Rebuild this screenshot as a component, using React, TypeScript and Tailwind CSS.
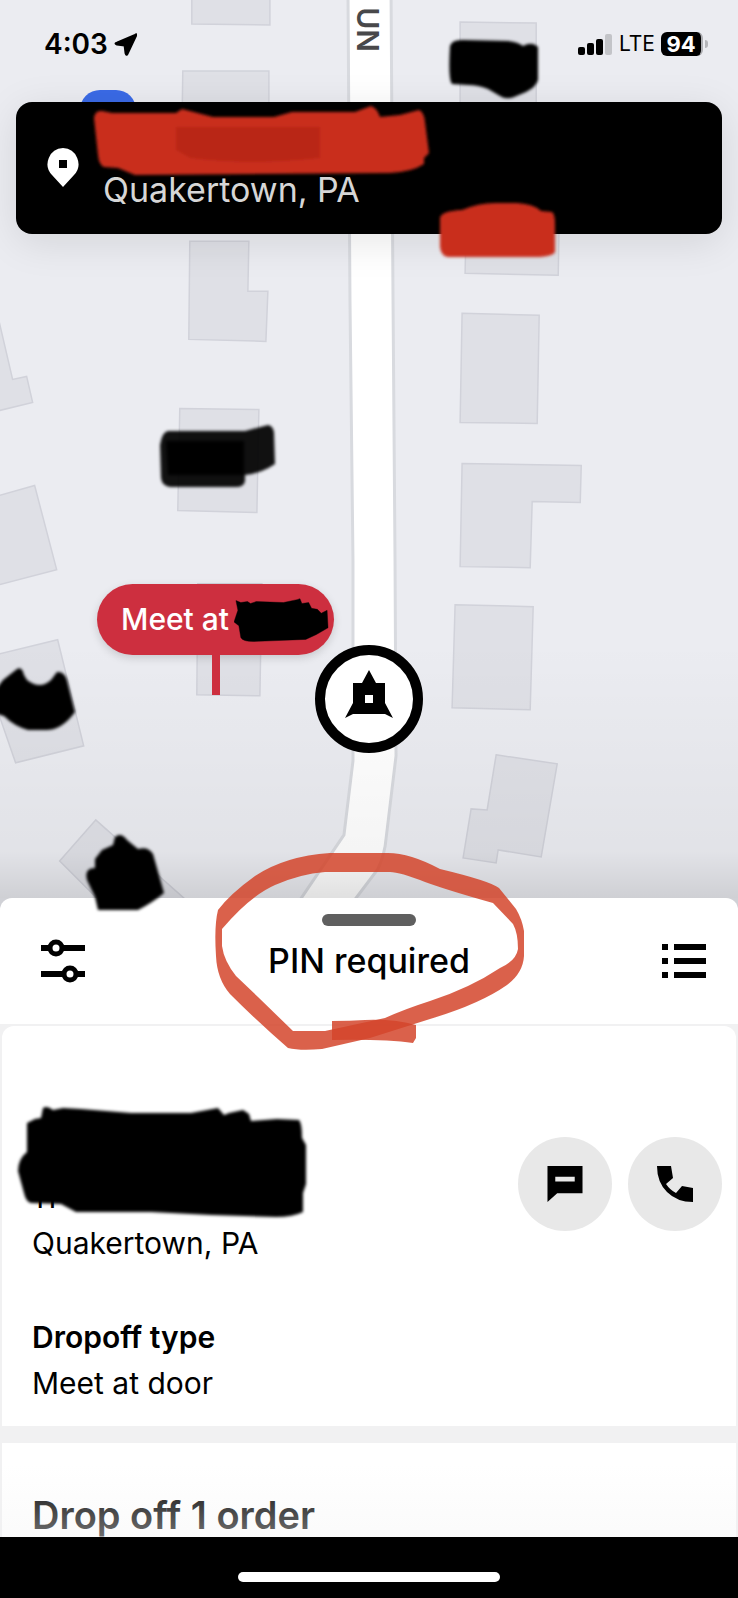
import type { ReactNode } from 'react';

const buildings = [
  'M192 -4H270V25L192 24Z',
  'M183 71L269 71V140H182Z',
  'M460 22L536 23V140H460Z',
  'M190 241L249 241L248 291H268L266 341L189 339Z',
  'M-4 306L13 379L27 376L33 402L-4 411Z',
  'M180 408L259 409L257 512L178 510Z',
  'M-4 496L35 485L57 569L-4 585Z',
  'M-20 658L58 639L84 745L16 762Z',
  'M198 583L262 583L260 695L197 694Z',
  'M96 819L60 860L130 930L210 920Z',
  'M466 220H559L558 275L465 273Z',
  'M462 313L539 315L537 423L460 422Z',
  'M462 463L581 465L580 502L532 501L530 567L460 566Z',
  'M455 604L533 606L530 709L452 707Z',
  'M496 754L557 763L541 856L498 849L496 862L463 857L471 808L487 809Z',
];

function CityMap() {
  return (
    <svg
      className="absolute inset-0 h-full w-full"
      viewBox="0 0 738 897"
      preserveAspectRatio="xMidYMin slice"
      aria-hidden="true"
    >
      <defs>
        <linearGradient id="shade" x1="0" y1="640" x2="0" y2="897" gradientUnits="userSpaceOnUse">
          <stop offset="0" stopColor="#000" stopOpacity="0" />
          <stop offset="0.82" stopColor="#000" stopOpacity="0.04" />
          <stop offset="1" stopColor="#000" stopOpacity="0.12" />
        </linearGradient>
        <filter id="smudge" x="-10%" y="-10%" width="120%" height="120%">
          <feGaussianBlur stdDeviation="1.5" />
        </filter>
      </defs>
      <rect width="738" height="897" fill="#ebecf1" />
      <g fill="#dfe0e6" stroke="#d1d2da" strokeWidth="1.5">
        {buildings.map((d) => (
          <path key={d} d={d} />
        ))}
      </g>
      <path
        d="M348 -10L350 300L353 560V760L344 834L296 905H350L378 868Q385 852 386 838L396 755L395 560L393 300L391 -10Z"
        fill="#fff"
        stroke="#d8dadf"
        strokeWidth="3"
      />
      <text
        transform="translate(357 52) rotate(90)"
        textAnchor="end"
        className="fill-[#48484a] text-[30px] font-semibold"
      >
        UN
      </text>
      <rect width="738" height="897" fill="url(#shade)" />
    </svg>
  );
}

// Hand drawn marker patches over the house numbers
function MapScribbles() {
  return (
    <svg className="pointer-events-none absolute left-0 top-0 h-[916px] w-[738px]" viewBox="0 0 738 916" aria-hidden="true">
      <g fill="#000" filter="url(#smudge)">
        <path d="M450 46Q452 39 464 40L508 41Q518 42 523 46Q532 41 538 47V80Q536 87 526 92L514 97Q506 100 500 96L488 89Q478 85 468 85L452 84Q448 80 450 46Z" />
        <path d="M168 431H245L268 425Q273 426 274 432L275 464Q262 473 245 475V481Q244 487 236 487H170Q162 486 161 478L160 445Q162 432 168 431Z" fillOpacity="0.93" />
        <path d="M166 441H244V475H168Z" />
        <path d="M-3 688L3 680L17 669Q22 666 24 675L27 680Q40 690 51 680L57 672Q64 671 67 680L75 712Q62 730 46 730H28Q14 726 4 716L-3 714Z" />
        <path d="M95 859L102 850L113 845L115 837Q121 832 127 840L138 849Q148 846 153 854L164 893Q152 903 138 910H98L95 897L87 880Q84 868 95 868Z" />
      </g>
    </svg>
  );
}

function StatusBar() {
  return (
    <div className="flex items-start justify-between pl-11 pr-[30px] pt-[30px]">
      <div className="flex items-center gap-[6px]">
        <span className="text-[28px] font-semibold leading-[28px]">4:03</span>
        <svg className="size-[23px]" viewBox="0 0 24 24" aria-hidden="true">
          <path d="M22 2Q24 0 23 3L14 22Q13 24 12 21L11 13L3 12Q0 11 3 10Z" fill="#000" stroke="#000" strokeWidth="2" strokeLinejoin="round" />
        </svg>
      </div>
      <div className="flex items-center gap-[6px]">
        <svg className="h-[21px] w-[35px]" viewBox="0 0 35 21" aria-hidden="true">
          <rect y="13" width="7" height="8" rx="2" />
          <rect x="9" y="9" width="7" height="12" rx="2" />
          <rect x="18" y="5" width="7" height="16" rx="2" />
          <rect x="27" width="7" height="21" rx="2" fill="#c3c4c8" />
        </svg>
        <span className="text-[21px] leading-[28px]">LTE</span>
        <div className="flex items-center gap-[2px]">
          <span className="flex h-6 w-[42px] items-center justify-center rounded-md border-r-2 border-[#aeafb3] bg-black text-[22px] font-bold text-white">
            94
          </span>
          <span className="h-2 w-[3px] rounded-r-full bg-[#b4b5b9]" />
        </div>
      </div>
    </div>
  );
}

function AddressCard() {
  return (
    <div className="relative mx-4 mt-[44px] flex h-[132px] rounded-2xl bg-black pl-[31px] shadow-[0_8px_40px_rgba(0,0,0,0.1)]">
      <svg className="mt-[46px] h-10 w-8 shrink-0" viewBox="0 0 32 40" aria-hidden="true">
        <path d="M16 0A16 16 0 0 1 27 27L16 39L5 27A16 16 0 0 1 16 0ZM12 12V20H20V12Z" fill="#fff" fillRule="evenodd" />
      </svg>
      <p className="ml-6 mt-[66px] text-[34px] leading-[44px] text-[#d6d6d6]">Quakertown, PA</p>
      <svg className="absolute left-[78px] top-1 h-[70px] w-[336px] overflow-visible" viewBox="94 106 336 70" aria-hidden="true">
        <g filter="url(#smudge)">
          <path
            d="M94 118Q95 110 102 111L112 113H176L182 109L213 117H274L292 112H355L371 106Q377 108 380 117L400 115L419 110Q424 112 425 122L429 153L424 158V164Q412 172 390 173L135 175L118 168L104 167Q99 165 98 155Z"
            fill="#c92d1f"
          />
          <path d="M176 127H320V158Q250 166 190 158L176 150Z" fill="#b92719" />
        </g>
      </svg>
      <svg className="absolute right-[165px] top-[100px] h-14 w-[118px] overflow-visible" viewBox="439 202 118 56" aria-hidden="true">
        <path
          d="M440 218Q441 211 462 210Q480 202 500 203H517Q534 204 541 211L552 212Q555 214 555 224V252Q552 257 535 257H448Q441 256 440 247Z"
          fill="#c92d1f"
          filter="url(#smudge)"
        />
      </svg>
    </div>
  );
}

function MeetMarker() {
  return (
    <div className="absolute left-[97px] top-[584px] flex flex-col items-center">
      <div className="flex h-[71px] items-center rounded-full bg-[#cd2f3f] pl-6 pr-1 shadow-[0_3px_8px_rgba(0,0,0,0.15)]">
        <span className="w-[113px] whitespace-nowrap text-[30px] font-medium text-white">Meet at</span>
        <svg className="h-12 w-24" viewBox="235 595 99 48" aria-hidden="true">
          <path
            d="M237 599L242 601L249 600L252 602L258 600L286 601L300 598L303 597L305 602L312 601L315 607L321 608L325 612L331 609L332 627L320 634L309 639L260 641Q244 642 242 637L240 625L235 621L239 609Z"
            stroke="#000"
            strokeOpacity="0.4"
          />
        </svg>
      </div>
      <span className="h-10 w-2 bg-[#cd2f3f]" />
    </div>
  );
}

function VehicleMarker() {
  return (
    <svg className="absolute left-1/2 top-[645px] h-[108px] w-[108px] -translate-x-1/2" viewBox="315 645 108 108" aria-hidden="true">
      <circle cx="369" cy="699" r="49" fill="#fff" stroke="#000" strokeWidth="10" />
      <path d="M369 670L376 683H385V703L393 718L385 714H353L345 718L353 703V683H362Z" />
      <rect x="365" y="695" width="8" height="8" fill="#fff" />
    </svg>
  );
}

// Red circle around the sheet title
function TitleRing() {
  return (
    <svg
      className="pointer-events-none absolute -top-[52px] left-1/2 h-[210px] w-[320px] -translate-x-1/2"
      viewBox="209 845 320 210"
      aria-hidden="true"
    >
      <path
        d="M330 852Q285 855 255 875Q230 893 218 909Q214 925 216 955Q217 978 230 993Q260 1023 288 1047Q300 1050 322 1048L370 1037L430 1018Q480 1003 507 984Q523 972 524 955L524 930Q522 918 516 908L499 887Q490 880 440 868Q410 852 388 852ZM325 871L390 871Q400 871 425 881Q450 890 493 902L513 923Q518 932 518 948Q516 960 500 967Q470 987 430 1000Q405 1008 385 1017L325 1030H293L258 996L236 975Q224 960 222 945V928Q250 895 275 884Q300 873 325 871Z"
        fill="#d4452b"
        fillOpacity="0.85"
        fillRule="evenodd"
      />
      <path d="M332 1020Q350 1020 365 1019Q395 1018 416 1024V1037L413 1042Q385 1038 332 1039Z" fill="#d4452b" fillOpacity="0.85" />
    </svg>
  );
}

function RoundButton({ label, children }: { label: string; children: ReactNode }) {
  return (
    <button type="button" aria-label={label} className="flex size-[94px] items-center justify-center rounded-full bg-[#e8e8e8]">
      {children}
    </button>
  );
}

export default function App() {
  return (
    <main className="relative flex min-h-screen flex-col overflow-hidden bg-white font-['Inter',sans-serif] text-black">
      <section className="relative min-h-[860px] flex-1">
        <CityMap />
        <div className="relative">
          <StatusBar />
          <span className="absolute left-20 top-[90px] h-10 w-14 rounded-[28px] bg-[#3a6ae6]" />
          <AddressCard />
        </div>
        <MeetMarker />
        <VehicleMarker />
      </section>

      <section className="relative bg-[#f1f1f2]">
        <div className="absolute inset-x-0 top-0 h-4 bg-[#d0d1d6]" />
        <header className="relative flex h-[126px] items-center justify-between rounded-t-xl bg-white px-8">
          <span className="absolute left-1/2 top-4 h-3 w-[94px] -translate-x-1/2 rounded-full bg-[#5f5f5f]" />
          <button type="button" aria-label="Preferences" className="w-16 p-2">
            <svg className="size-[46px]" viewBox="0 0 46 46" aria-hidden="true">
              <path d="M1 10H45M1 36H45" stroke="#000" strokeWidth="6" />
              <circle cx="16" cy="10" r="6" fill="#fff" stroke="#000" strokeWidth="5" />
              <circle cx="30" cy="36" r="6" fill="#fff" stroke="#000" strokeWidth="5" />
            </svg>
          </button>
          <h1 className="text-[34px] font-medium leading-[44px]">PIN required</h1>
          <button type="button" aria-label="Trip list" className="flex w-16 justify-end py-2">
            <svg className="h-[34px] w-11" viewBox="0 0 44 34" aria-hidden="true">
              <path d="M0 3H6M12 3H44M0 17H6M12 17H44M0 31H6M12 31H44" stroke="#000" strokeWidth="6" />
            </svg>
          </button>
          <TitleRing />
        </header>

        <div className="mx-[2px] mt-[2px] flex items-start justify-between rounded-t-xl bg-white pb-5 pl-[30px] pr-[14px] pt-[78px]">
          <div>
            <svg className="-ml-4 h-[116px] w-[292px] overflow-visible" viewBox="15 1103 292 116" aria-hidden="true">
              <text x="31" y="1207" className="text-[30px]">11</text>
              <path
                d="M34 1118L40 1117L42 1107Q46 1104 52 1109L62 1107L80 1108L130 1112H190L217 1107L223 1114L228 1112L242 1109L248 1113L250 1120L276 1118L298 1119Q301 1122 301 1137L305 1144V1183L302 1192V1211Q292 1216 275 1216L210 1214L150 1211L75 1211L60 1203L30 1202Q25 1201 23 1192L17 1170Q17 1158 26 1151V1122Z"
                filter="url(#smudge)"
              />
            </svg>
            <p className="text-[30px] leading-[46px]">Quakertown, PA</p>
            <h2 className="mt-12 text-[30px] font-semibold leading-[46px]">Dropoff type</h2>
            <p className="text-[30px] leading-[46px]">Meet at door</p>
          </div>
          <div className="mt-[33px] flex gap-4">
            <RoundButton label="Message">
              <svg className="size-9" viewBox="0 0 36 37" aria-hidden="true">
                <path d="M0 0H36V28H10L0 37ZM8 11V16H28V11Z" fillRule="evenodd" />
              </svg>
            </RoundButton>
            <RoundButton label="Call">
              <svg className="size-9" viewBox="0 0 36 36" aria-hidden="true">
                <path d="M0 0H14L16 12L9 18Q13 24 19 27L25 20L36 22V36Q20 36 10 26Q0 16 0 0Z" />
              </svg>
            </RoundButton>
          </div>
        </div>

        <div className="relative mx-[2px] mt-[17px] h-[94px] overflow-hidden bg-white pl-[30px] pt-12">
          <h2 className="text-[38px] font-semibold leading-[48px]">Drop off 1 order</h2>
          <div className="absolute inset-x-0 bottom-0 h-[72px] bg-linear-to-b from-[#f5f5f5]/0 to-[#f5f5f5]/45" />
        </div>
      </section>

      <footer className="flex h-[61px] justify-center bg-black pt-[35px]">
        <span className="h-[10px] w-[262px] rounded-full bg-white" />
      </footer>
      <MapScribbles />
    </main>
  );
}
